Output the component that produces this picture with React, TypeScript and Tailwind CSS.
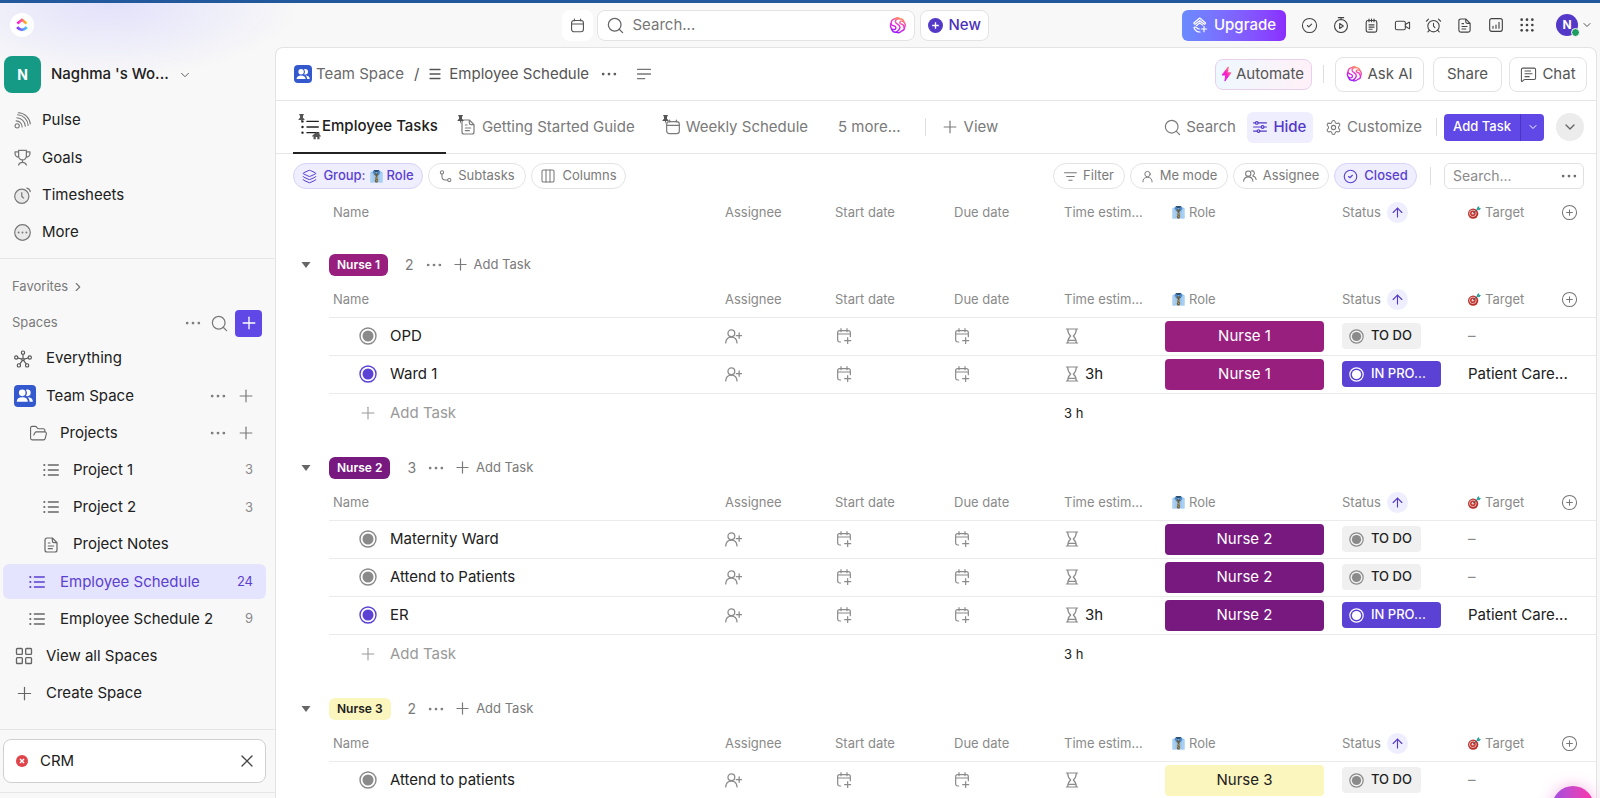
import React from "react";
import {
  AlarmClock, ArrowUp, ChevronDown, ChevronRight, CircleCheck, CirclePlus, Columns3, Ellipsis,
  FolderOpen, LayoutGrid, Layers, MessageSquareText, Plus, Search, Settings, Video, X,
} from "lucide-react";

type P = { className?: string };

const Svg = ({ className = "size-4", children, w = 1.5 }: P & { children: React.ReactNode; w?: number }) => (
  <svg viewBox="0 0 24 24" fill="none" stroke="currentColor" strokeWidth={w} strokeLinecap="round" strokeLinejoin="round" className={"shrink-0 " + className} aria-hidden="true">
    {children}
  </svg>
);

const Logo = () => (
  <svg viewBox="0 0 24 24" className="size-6 shrink-0" aria-hidden="true">
    <defs>
      <linearGradient id="lg-top" x1="0" x2="1"><stop stopColor="#ff02f0" /><stop offset="1" stopColor="#ffc800" /></linearGradient>
      <linearGradient id="lg-bot" x1="0" x2="1"><stop stopColor="#8930fd" /><stop offset="1" stopColor="#49ccf9" /></linearGradient>
    </defs>
    <circle cx="12" cy="12" r="12" fill="#fff" />
    <path d="M7.400 10.400 12 6.800l4.600 3.600" fill="none" stroke="url(#lg-top)" strokeWidth="2.600" />
    <path d="M7.200 14.200c2.800 3.600 6.800 3.600 9.600 0" fill="none" stroke="url(#lg-bot)" strokeWidth="2.800" />
  </svg>
);

const Calendar = ({ className }: P) => (
  <Svg className={className} w={1.8}><rect x="2.500" y="4" width="19" height="18" rx="4" /><path d="M2.500 9.500h19M7 1.500v3M17 1.500v3" /></Svg>
);
const CalendarAdd = ({ className }: P) => (
  <Svg className={className} w={1.8}><path d="M7 21H5.500A3 3 0 0 1 2.500 18V7A3 3 0 0 1 5.500 4h13a3 3 0 0 1 3 3v6M2.500 9h19M7.500 1v4.500M16.500 1v4.500M17.500 14.500v9M13 19h9" /></Svg>
);
const Pulse = ({ className }: P) => (
  <Svg className={className}><circle cx="4.500" cy="19.500" r="3" /><path d="M3 12.500a8.500 8.500 0 0 1 8.500 8.500M4 8a12.500 12.500 0 0 1 12 12M5 4a15.500 15.500 0 0 1 15 15M6 1A17.500 17.500 0 0 1 23 17" /></Svg>
);
const Trophy = ({ className }: P) => (
  <Svg className={className} w={1.8}><path d="M6.500 2h11v8a5.500 5.500 0 0 1-11 0zM6.500 4H1.500v2.500a5 5 0 0 0 5 5M17.500 4h5v2.500a5 5 0 0 1-5 5M12 15.500V19M6.500 22.500c1-2.300 2.500-3.500 5.500-3.500s4.500 1.200 5.500 3.500" /></Svg>
);
const Timesheet = ({ className }: P) => (
  <Svg className={className} w={1.7}><circle cx="11" cy="13" r="10" fill="#e9e9e9" /><path d="M11 8v5.500l2.500 2M18 1.500c2.500.4 4.500 2.500 5 5" /></Svg>
);
const More = ({ className }: P) => (
  <Svg className={className} w={1.7}><circle cx="12" cy="12" r="11" fill="#e9e9e9" /><path d="M6.500 12h.01M12 12h.01M17.500 12h.01" strokeWidth="2.600" /></Svg>
);
const Network = ({ className }: P) => (
  <Svg className={className}>
    <circle cx="12" cy="3.500" r="2.200" /><circle cx="3" cy="10" r="2.200" /><circle cx="21" cy="10" r="2.200" /><circle cx="6.500" cy="20.500" r="2.200" /><circle cx="17.500" cy="20.500" r="2.200" /><circle cx="12" cy="12.800" r="1.500" />
    <path d="M12 5.700V11M5.200 10.600l5.300 1.600M18.800 10.600l-5.300 1.600M7.800 18.600l3.200-4.500M16.200 18.600 13 14.100" />
  </Svg>
);
const Hamburger = ({ className }: P) => <Svg className={className} w={2.6}><path d="M2 3h20M2 12h20M2 21h20" /></Svg>;
const Lines = ({ className }: P) => <Svg className={className} w={2.4}><path d="M1 4h22M1 12h22M1 20h12" /></Svg>;
const FilterIcon = ({ className }: P) => <Svg className={className} w={2}><path d="M1 5h22M5 12h14M9 19h6" /></Svg>;
const Sliders = ({ className }: P) => (
  <Svg className={className} w={2}><path d="M1 5h3M9 5h14M1 12h13M19 12h4M1 19h6M12 19h11" /><circle cx="6.500" cy="5" r="2.300" /><circle cx="16.500" cy="12" r="2.300" /><circle cx="9.500" cy="19" r="2.300" /></Svg>
);
const Subtask = ({ className }: P) => (
  <Svg className={className} w={1.9}><circle cx="5.500" cy="4.500" r="3" /><circle cx="19" cy="18.500" r="3" /><path d="M5.500 7.500V12c0 4 2 6.500 6 6.500h4.500" /></Svg>
);
const Stopwatch = ({ className }: P) => (
  <Svg className={className} w={1.7}><circle cx="12" cy="13.500" r="9.700" /><path d="M8 1h8M12 1v3M10 9.800v7.400l5.500-3.700z" /></Svg>
);
const Notepad = ({ className }: P) => (
  <Svg className={className} w={1.8}><rect x="3.500" y="4" width="17" height="18.500" rx="3" /><path d="M8 1.500V6M12 1.500V6M16 1.500V6M8 11h8M8 14.500h8M8 18h5" /></Svg>
);
const Apps = ({ className }: P) => (
  <svg viewBox="0 0 24 24" className={className} fill="currentColor" aria-hidden="true">
    {[4, 12, 20].map((y) => [4, 12, 20].map((x) => <circle key={x + "-" + y} cx={x} cy={y} r="2" />))}
  </svg>
);
const Chart = ({ className }: P) => (
  <Svg className={className} w={1.7}><rect x="2.500" y="2.500" width="19" height="19" rx="3" /><path d="M7.500 17v-3M12 17v-5M16.500 17V8" /></Svg>
);
const Ai = ({ className }: P) => (
  <svg viewBox="0 0 24 24" className={"shrink-0 " + className} fill="none" stroke="url(#ai-g)" strokeWidth="2" strokeLinecap="round" aria-hidden="true">
    <defs><linearGradient id="ai-g" x1="0.300" y1="1" x2="0.700" y2="0"><stop stopColor="#9a1cff" /><stop offset=".55" stopColor="#f02bd4" /><stop offset="1" stopColor="#ff8a5c" /></linearGradient></defs>
    <path d="M8.500 2.500c2-1.500 5-1.500 7 0 3 0 5 2 5.500 4.500 2 2 2.400 5 1 7.500 0 3-2 5-4.500 5.500-2 2.400-5 2.800-7.500 1.500-3 .3-5.500-1.500-6-4.500-2-2-2.300-5-1-7.500 0-3.500 2.500-6.500 5.500-7z" />
    <path d="M15 2.500c-3.500 0-6 1.500-6 4 0 4 6.500 3 6.500 8 0 3-2.500 5-5.500 7M2.500 9.500c1.500 3 5 2.500 6.500 4s.5 4-1.500 4.200c-1.500.2-3-.2-4-.7M21.500 15c-.5-3.500-2-5-4-5.200-2-.3-3-2.300-1.500-3.500 1.500-1 3.500-.3 5 .700" />
  </svg>
);
const Bolt = ({ className }: P) => (
  <svg viewBox="0 0 12 18" className={className} aria-hidden="true">
    <defs><linearGradient id="bolt-g" x1="0" y1="1" x2="1" y2="0"><stop stopColor="#b020ff" /><stop offset=".5" stopColor="#ff1fc8" /><stop offset="1" stopColor="#ff9a4c" /></linearGradient></defs>
    <path d="M8 1 1 10.200h4L4.200 17 11 7.600H7.200z" fill="url(#bolt-g)" stroke="url(#bolt-g)" strokeLinejoin="round" />
  </svg>
);
const UpgradeIcon = ({ className }: P) => (
  <Svg className={className} w={1.8}><path d="M3 8.500 11.500 1.500 20 8.500c.8 1-.8 2.800-2 2L11.500 5.500 5 10.500c-1.200.8-2.800-1-2-2zM6.500 13l5-4 4.500 3.200M3.200 15.500c1.500-1 2.500-.5 3.500.5 1.500 1.500 3 2 4.300 2M3 16c1.500 4 5 6.500 9 6.500M18 14v8M14 18h8" /></Svg>
);
const People = ({ className }: P) => (
  <span className={"flex shrink-0 items-center justify-center bg-[#3459cf] " + className}>
    <svg viewBox="0 0 24 24" className="size-4/5" fill="#fff" aria-hidden="true">
      <path d="M15.500 3.500a4.500 4.500 0 0 1 0 9c-.8 0-1.500-.2-2-.5 2-2.500 2-5.500 0-8 .5-.3 1.200-.5 2-.5zM17 14c3.500.5 6 2.500 6 6h-4.500c0-2.500-.8-4.500-2.500-6z" />
      <circle cx="8.500" cy="8" r="4.500" /><path d="M1 20c0-4 3-6 7.500-6s7.500 2 7.500 6z" />
    </svg>
  </span>
);
const Assignees = ({ className }: P) => (
  <Svg className={className} w={1.800}><circle cx="9" cy="8" r="4.500" /><path d="M1 21c.5-5 3-7.500 8-7.500s7.500 2.500 8 7.500M14 3.500c4.500-1.500 7.500 3.500 4 7l-1.500 1.500c3.500.5 5.500 2.500 6 6" /></Svg>
);
const Person = ({ className }: P) => (
  <Svg className={className} w={1.800}><circle cx="12" cy="7.500" r="5" /><path d="M3.500 22c0-5.500 3-8.500 8.500-8.500s8.500 3 8.500 8.500" /></Svg>
);
const PersonAdd = ({ className }: P) => (
  <Svg className={className} w={1.800}><circle cx="9" cy="7.500" r="4.800" /><path d="M1 21c.5-5 3-8 8-8s7.500 3 8 8M20 7v7.500M16 10.800h7.500" /></Svg>
);
const HourglassIcon = ({ className }: P) => (
  <Svg className={className} w={1.800}><path d="M3.500 1.500h17M3.500 22.500h17M5.500 1.500c0 6 1 7.500 4.500 10.500-3.500 3-4.500 4.500-4.500 10.500M18.500 1.500c0 6-1 7.500-4.500 10.500 3.500 3 4.500 4.500 4.500 10.500M8 18.500h8" /></Svg>
);
const Doc = ({ className }: P) => (
  <Svg className={className} w={1.800}><path d="M14 1.500H6A3 3 0 0 0 3 4.500v15a3 3 0 0 0 3 3h12a3 3 0 0 0 3-3V8.500zM14 1.500V6a2.500 2.500 0 0 0 2.500 2.500H21M8 9h2.500M8 13.500h8M8 17.500h6" /></Svg>
);
const Dotlist = ({ className }: P) => (
  <Svg className={className} w={1.900}><path d="M8 4.500h15M8 12h15M8 19.500h15" /><path d="M2 4.500h.01M2 12h.01M2 19.500h.01" strokeWidth="3.200" /></Svg>
);
const Shirt = ({ className }: P) => (
  <svg viewBox="1 0 22 24" className={"shrink-0 " + className} aria-hidden="true">
    <path d="M1 4 7 1h10l6 3v19H1z" fill="#9cc6ee" /><path d="M1 4v19h5V8zM23 4v19h-5V8z" fill="#a9d0f3" />
    <path d="M7 0h10l-1 4H8z" fill="#2c4f74" /><path d="m7 1 5 5-4 4-3-6zM17 1l-5 5 4 4 3-6z" fill="#4a86c4" />
    <path d="m10 5 2 2 2-2 1 4-1.500 2L15 20l-1 3h-4l-1-3 1.500-9L9 9z" fill="#6b5d3a" /><path d="m10 13 4 3M10 17.500l4 3" stroke="#d7bd7a" strokeWidth="1.500" />
  </svg>
);
const TargetIcon = ({ className }: P) => (
  <svg viewBox="0 0 24 24" className={"shrink-0 " + className} aria-hidden="true">
    <ellipse cx="9.500" cy="14" rx="9.500" ry="9.500" fill="#b9302b" /><circle cx="9" cy="13.500" r="6.600" fill="#eccfce" /><circle cx="9" cy="13.500" r="5.200" fill="#c9362f" /><circle cx="9" cy="13.500" r="2.200" fill="#f3dedd" />
    <path d="m9 13.500 9-7.500" stroke="#465560" strokeWidth="1.800" /><path d="m16 7.500.5-4.500 3.500-3 .8 3.200 3.200.8-3 4z" fill="#2fa39b" />
  </svg>
);
const Pin = ({ className }: P) => (
  <svg viewBox="0 0 12 12" className={className} fill="#555" aria-hidden="true"><path d="M3 0h6v1.500L8 2v3l2 2v1H6.700L6 12l-.7-4H2V7l2-2V2L3 1.500z" /></svg>
);
const HomeMini = ({ className }: P) => (
  <svg viewBox="0 0 12 12" className={className} fill="#555" aria-hidden="true"><path d="M6 1 0 6.500l1 1L2 7v4h3V8h2v3h3V7l1 .5 1-1L10 4.500V2H8.500v1.200z" /></svg>
);
const StatusDot = ({ className }: P) => (
  <svg viewBox="0 0 18 18" className={"shrink-0 " + className} aria-hidden="true"><circle cx="9" cy="9" r="8" fill="none" stroke="currentColor" strokeWidth="1.400" /><circle cx="9" cy="9" r="5.500" fill="currentColor" /></svg>
);
const Dots = () => <Ellipsis className="size-5" strokeWidth={1.3} />;

const quick = [
  { label: "Pulse", Icon: Pulse }, { label: "Goals", Icon: Trophy }, { label: "Timesheets", Icon: Timesheet }, { label: "More", Icon: More },
];

const Row = ({ icon, label, pad, right, active }: { icon: React.ReactNode; label: string; pad: string; right?: React.ReactNode; active?: boolean }) => (
  <li className="flex min-h-8 flex-1 items-center pr-[9px] pl-[3px]">
    <div className={"flex h-[35px] w-full items-center rounded-md pr-[13px] " + pad + (active ? " bg-[#e5e4ff] text-[#5b3fd0]" : "")}>
      <a href="#" className="flex min-w-0 flex-1 items-center">{icon}<span className="truncate">{label}</span></a>
      {right}
    </div>
  </li>
);

const RowActions = ({ name }: { name: string }) => (
  <span className="-mr-[3px] flex items-center gap-2 text-[#777]">
    <button aria-label={name + " options"}><Dots /></button>
    <button aria-label={"Add to " + name}><Plus className="size-5" strokeWidth={1.4} /></button>
  </span>
);
const Count = ({ n, on }: { n: number; on?: boolean }) => <span className={"text-[13px] " + (on ? "" : "text-[#8a8a8a]")}>{n}</span>;

function Sidebar() {
  return (
    <aside className="flex w-[275px] shrink-0 flex-col text-[15px] text-[#202020]">
      <div className="flex h-[55px] shrink-0 items-center pl-1">
        <span className="flex size-[37px] items-center justify-center rounded-lg bg-[#159a86] text-sm font-bold text-white">N</span>
        <button className="ml-[10px] flex items-center gap-[9px] font-medium">Naghma 's Wo...<ChevronDown className="size-[14px] text-[#555]" strokeWidth={1.6} /></button>
      </div>
      <ul className="flex h-[157px] shrink-0 flex-col border-b border-[#e6e6e6] pb-[7px]">
        {quick.map(({ label, Icon }) => (
          <li key={label} className="flex flex-1 items-center">
            <a href="#" className="flex items-center gap-[11px] pl-[14px]"><Icon className="size-[17px] text-[#777]" />{label}</a>
          </li>
        ))}
      </ul>
      <div className="flex h-[51px] shrink-0 items-center pt-1 pl-3 text-[13px] text-[#7a7a7a]"><button className="flex items-center gap-[3px]">Favorites<ChevronRight className="size-[14px]" /></button></div>
      <div className="flex h-[26px] shrink-0 items-center pr-[13px] pl-3 text-[13px] text-[#7a7a7a]">
        <span className="flex-1">Spaces</span>
        <button aria-label="Space options"><Dots /></button>
        <button aria-label="Search spaces" className="mr-1.5 ml-[7px]"><Search className="size-[19px]" strokeWidth={1.6} /></button>
        <button aria-label="New space" className="flex size-[27px] items-center justify-center rounded bg-[#5f48e5] text-white"><Plus className="size-5" strokeWidth={1.6} /></button>
      </div>
      <ul className="flex min-h-0 flex-1 flex-col pt-1 pb-[17px]">
        <Row pad="pl-[11px]" icon={<Network className="mr-[14px] size-[18px] text-[#555]" />} label="Everything" />
        <Row pad="pl-[11px]" icon={<People className="mr-[10px] size-[22px] rounded" />} label="Team Space" right={<RowActions name="Team Space" />} />
        <Row pad="pl-[26px]" icon={<FolderOpen className="mr-3 size-[19px] text-[#666]" strokeWidth={1.4} />} label="Projects" right={<RowActions name="Projects" />} />
        <Row pad="pl-10" icon={<Dotlist className="mr-[14px] size-4 text-[#666]" />} label="Project 1" right={<Count n={3} />} />
        <Row pad="pl-10" icon={<Dotlist className="mr-[14px] size-4 text-[#666]" />} label="Project 2" right={<Count n={3} />} />
        <Row pad="pl-10" icon={<Doc className="mr-[14px] size-4 text-[#666]" />} label="Project Notes" />
        <Row pad="pl-[26px]" icon={<Dotlist className="mr-[15px] size-4" />} label="Employee Schedule" right={<Count n={24} on />} active />
        <Row pad="pl-[26px]" icon={<Dotlist className="mr-[15px] size-4 text-[#666]" />} label="Employee Schedule 2" right={<Count n={9} />} />
        <Row pad="pl-[11px]" icon={<LayoutGrid className="mr-3 size-5 text-[#666]" strokeWidth={1.6} />} label="View all Spaces" />
        <Row pad="pl-[11px]" icon={<Plus className="mr-[11px] size-[21px] text-[#666]" strokeWidth={1.4} />} label="Create Space" />
      </ul>
      <div className="shrink-0 border-y border-[#e6e6e6] py-[9px] pr-[9px] pl-[3px]">
        <div className="flex h-[44px] items-center rounded-lg border border-[#d0d0d0] bg-white pr-2 pl-3">
          <svg viewBox="0 0 12 12" className="mr-3 size-3" aria-hidden="true"><circle cx="6" cy="6" r="6" fill="#e04349" /><path d="m4 4 4 4M8 4 4 8" stroke="#fff" strokeWidth="1.500" /></svg>
          <span className="flex-1">CRM</span>
          <button aria-label="Close CRM"><X className="size-5 text-[#444]" strokeWidth={1.6} /></button>
        </div>
      </div>
      <div className="h-[5px] shrink-0" />
    </aside>
  );
}

const tools = [
  { label: "Tasks", Icon: CircleCheck, size: "size-[17px]" }, { label: "Timer", Icon: Stopwatch, size: "size-4" }, { label: "Notepad", Icon: Notepad, size: "size-[15px]" },
  { label: "Record clip", Icon: Video, size: "size-[17px]" }, { label: "Reminders", Icon: AlarmClock, size: "size-[17px]" }, { label: "Docs", Icon: Doc, size: "size-[15px]" },
  { label: "Dashboards", Icon: Chart, size: "size-4" }, { label: "Apps", Icon: Apps, size: "size-4" },
];

function TopBar() {
  return (
    <header className="grid h-11 shrink-0 grid-cols-[1fr_auto_1fr] items-center">
      <div className="pl-[10px]"><Logo /></div>
      <div className="mr-[50px] flex h-[31px] items-stretch">
        <button aria-label="Calendar" className="mr-1 flex w-[31px] items-center justify-center rounded-lg bg-white text-[#555]"><Calendar className="size-[15px]" /></button>
        <label className="mr-[5px] flex w-[318px] items-center rounded-lg border border-[#e3e3e3] bg-white px-[8px]">
          <Search className="mr-2 size-[19px] text-[#666]" strokeWidth={1.6} />
          <input aria-label="Search" placeholder="Search..." className="min-w-0 flex-1 text-[15px] text-[#444] outline-none placeholder:text-[#777]" />
          <Ai className="size-[17px]" />
        </label>
        <button className="flex w-[69px] items-center gap-[6px] rounded-lg border border-[#e3e3e3] bg-white pl-[7px] text-[15px] font-medium text-[#4a32b8]">
          <svg viewBox="0 0 16 16" className="size-[15px] shrink-0" aria-hidden="true"><circle cx="8" cy="8" r="8" fill="#5438c8" /><path d="M8 4.500v7M4.500 8h7" stroke="#fff" strokeWidth="1.400" /></svg>New
        </button>
      </div>
      <div className="flex items-center justify-end pr-[7px]">
        <button className="mr-2 flex h-[31px] w-[104px] items-center justify-center gap-[6px] rounded-md bg-linear-to-r from-[#6a8bff] to-[#8a2cff] text-[15px] font-medium text-white"><UpgradeIcon className="size-4" />Upgrade</button>
        {tools.map(({ label, Icon, size }) => (
          <button key={label} aria-label={label} className="flex w-[31px] items-center justify-center text-[#444]"><Icon className={size} strokeWidth={1.5} /></button>
        ))}
        <button aria-label="Account" className="ml-[14px] flex items-center gap-[3px]">
          <span className="relative flex size-[22px] items-center justify-center rounded-full bg-[#5438c8] text-xs font-bold text-white">N
            <span className="absolute -right-[2px] -bottom-[1px] size-[9px] rounded-full border border-white bg-[#1f9d61]" />
          </span>
          <ChevronDown className="size-3 text-[#555]" />
        </button>
      </div>
    </header>
  );
}

const Sep = ({ className = "" }: P) => <span className={"h-[18px] w-px bg-[#dedede] " + className} />;

function Breadcrumbs() {
  const btn = "flex h-[35px] items-center justify-center gap-[5px] rounded-lg border border-[#e3e3e3] bg-white";
  return (
    <div className="flex h-[53px] shrink-0 items-center border-b border-[#e6e6e6] pr-[9px] pl-[18px] text-[15px] text-[#555]">
      <People className="mr-1 size-[18px] rounded" /><a href="#" className="text-[#6a6a6a]">Team Space</a>
      <span className="mx-[10px]">/</span><Hamburger className="mr-2 size-3" /><a href="#">Employee Schedule</a>
      <button aria-label="List options" className="ml-[10px]"><Dots /></button>
      <button aria-label="Description" className="ml-[18px] text-[#777]"><Lines className="size-[14px]" /></button>
      <div className="ml-auto flex items-center">
        <button className="flex h-[31px] w-[97px] items-center gap-1 rounded-lg border border-[#e9cfee] bg-linear-to-r from-[#eef8ff] to-[#fff1f7] pl-[5px]"><Bolt className="h-4 w-[11px]" />Automate</button>
        <Sep className="mx-[11px]" />
        <button className={btn + " mr-[9px] w-[89px]"}><Ai className="size-4" />Ask AI</button>
        <button className={btn + " mr-[7px] w-[69px]"}>Share</button>
        <button className={btn + " w-[78px]"}><MessageSquareText className="size-[17px]" strokeWidth={1.5} />Chat</button>
      </div>
    </div>
  );
}

function Tabs() {
  return (
    <div className="flex h-[53px] shrink-0 items-stretch border-b border-[#e6e6e6] pr-3 pl-[17px] text-[15px] text-[#7a7a7a]">
      <button className="relative -mb-px flex items-center gap-[3px] border-b-2 border-[#222] px-2 font-medium text-[#202020]">
        <span className="relative"><Dotlist className="size-[18px]" /><Pin className="absolute -top-1 -left-1 size-[9px]" /><HomeMini className="absolute -right-0.5 -bottom-1 size-[9px]" /></span>Employee Tasks
      </button>
      <button className="ml-[14px] flex items-center gap-[6px]"><span className="relative"><Doc className="size-4" /><Pin className="absolute -top-1 -left-1 size-[9px]" /></span>Getting Started Guide</button>
      <button className="ml-[30px] flex items-center gap-[5px]"><span className="relative"><Calendar className="size-4" /><Pin className="absolute -top-1 -left-1 size-[9px]" /></span>Weekly Schedule</button>
      <button className="ml-[30px]">5 more...</button>
      <Sep className="mr-[14px] ml-6 self-center" />
      <button className="flex items-center gap-1"><Plus className="size-5" strokeWidth={1.4} />View</button>
      <div className="ml-auto flex items-center">
        <button className="flex items-center gap-1"><Search className="size-[19px]" strokeWidth={1.5} />Search</button>
        <button className="mr-3 ml-[11px] flex h-[31px] w-[66px] items-center justify-center gap-[6px] rounded-md bg-[#eeeeff] font-medium text-[#5438c8]"><Sliders className="size-[14px]" />Hide</button>
        <button className="flex items-center gap-[5px]"><Settings className="size-[17px]" strokeWidth={1.5} />Customize</button>
        <Sep className="mr-[7px] ml-[14px]" />
        <div className="mr-3 flex h-[27px] w-[100px] overflow-hidden rounded bg-[#5f48e5] text-[13px] font-medium text-white">
          <button className="flex-1">Add Task</button>
          <button aria-label="More task types" className="flex w-6 items-center justify-center border-l border-[#4b34c4]"><ChevronDown className="size-3" /></button>
        </div>
        <button aria-label="Collapse" className="flex size-7 items-center justify-center rounded-full bg-[#ececec] text-[#666]"><ChevronDown className="size-4" /></button>
      </div>
    </div>
  );
}

function Chip({ children, w, on }: { children: React.ReactNode; w: string; on?: boolean }) {
  return <button className={"flex h-[26px] items-center justify-center gap-[6px] rounded-full border " + w + (on ? " border-[#d6d3f7] bg-[#eeeeff] font-medium text-[#5b3fd0]" : " border-[#e3e3e3] text-[#7a7a7a]")}>{children}</button>;
}

function Filters() {
  return (
    <div className="flex shrink-0 items-center pt-[9px] pr-3 pl-[17px] text-[13px]">
      <div className="flex gap-[5px]">
        <Chip w="w-[130px]" on><Layers className="size-[15px]" strokeWidth={1.6} /><span className="flex items-center gap-1">Group:<Shirt className="size-[13px]" />Role</span></Chip>
        <Chip w="w-[98px]"><Subtask className="size-[13px]" />Subtasks</Chip>
        <Chip w="w-[95px]"><Columns3 className="size-4" strokeWidth={1.6} />Columns</Chip>
      </div>
      <div className="ml-auto flex items-center gap-[5px]">
        <Chip w="w-[72px]"><FilterIcon className="size-[13px]" />Filter</Chip>
        <Chip w="w-[98px]"><Person className="size-[13px]" />Me mode</Chip>
        <Chip w="w-[96px]"><Assignees className="size-[14px]" />Assignee</Chip>
        <Chip w="w-[83px]" on><CircleCheck className="size-[15px]" strokeWidth={1.8} />Closed</Chip>
        <Sep className="mx-2" />
        <label className="flex h-[26px] w-[140px] items-center rounded-md border border-[#e0e0e0] pr-1 pl-2">
          <input aria-label="Search tasks" placeholder="Search..." className="min-w-0 flex-1 text-sm outline-none placeholder:text-[#8a8a8a]" /><span className="text-[#666]"><Dots /></span>
        </label>
      </div>
    </div>
  );
}

const Cols = () => (
  <colgroup><col /><col className="w-[110px]" /><col className="w-[119px]" /><col className="w-[110px]" /><col className="w-[101px]" /><col className="w-[177px]" /><col className="w-[126px]" /><col className="w-[128px]" /></colgroup>
);

function HeadRow({ line }: { line?: boolean }) {
  return (
    <tr className={"h-[35px] text-[13px] text-[#8a8a8a] *:p-0 *:text-left *:font-normal " + (line ? "border-b border-[#ebebeb]" : "")}>
      <th scope="col"><span className="pl-1">Name</span></th><th scope="col">Assignee</th><th scope="col">Start date</th><th scope="col">Due date</th><th scope="col">Time estim...</th>
      <th scope="col"><span className="flex items-center gap-1 pl-[7px]"><Shirt className="size-[13px]" />Role</span></th>
      <th scope="col"><span className="flex items-center gap-[6px]">Status<span className="flex size-[21px] items-center justify-center rounded-full bg-[#eeeeff] text-[#5438c8]"><ArrowUp className="size-[15px]" strokeWidth={1.8} /></span></span></th>
      <th scope="col"><span className="flex items-center gap-1"><TargetIcon className="size-[13px]" />Target<button aria-label="Add column" className="mr-[18px] ml-auto"><CirclePlus className="size-[17px] text-[#777]" strokeWidth={1.5} /></button></span></th>
    </tr>
  );
}

type Task = { name: string; busy?: boolean };
const groups: { name: string; color: string; count: number; tasks: Task[]; total?: string }[] = [
  { name: "Nurse 1", color: "bg-[#991f7e] text-white", count: 2, tasks: [{ name: "OPD" }, { name: "Ward 1", busy: true }], total: "3 h" },
  { name: "Nurse 2", color: "bg-[#77197f] text-white", count: 3, tasks: [{ name: "Maternity Ward" }, { name: "Attend to Patients" }, { name: "ER", busy: true }], total: "3 h" },
  { name: "Nurse 3", color: "bg-[#fbf5be] text-[#202020]", count: 2, tasks: [{ name: "Attend to patients" }] },
];

function Group({ name, color, count, tasks, total }: (typeof groups)[number]) {
  return (
    <section>
      <div className="flex h-[35px] items-center pl-[25px] text-[13px] text-[#7a7a7a]">
        <button aria-label={"Collapse " + name} className="mr-[18px]"><svg viewBox="0 0 10 6" className="h-[6px] w-[10px]" fill="#666" aria-hidden="true"><path d="M.5 0h9L5 6z" /></svg></button>
        <span className={"rounded-md px-2 text-xs leading-[22px] font-semibold " + color}>{name}</span>
        <span className="ml-[17px] text-sm">{count}</span>
        <button aria-label={name + " options"} className="ml-[10px]"><Dots /></button>
        <button className="ml-[7px] flex items-center gap-1"><Plus className="size-[19px]" strokeWidth={1.5} />Add Task</button>
      </div>
      <div className="pl-[53px]">
        <table className="w-full table-fixed border-collapse text-[15px] text-[#202020]">
          <Cols />
          <thead><HeadRow line /></thead>
          <tbody>
            {tasks.map((t) => (
              <tr key={t.name} className="h-[38px] border-b border-[#ebebeb] text-[#8a8a8a] *:p-0">
                <td><span className="flex items-center gap-[13px] pl-[30px]"><StatusDot className={"size-[18px] " + (t.busy ? "text-[#5b41d4]" : "text-[#8a8a8a]")} /><a href="#" className="text-[#202020]">{t.name}</a></span></td>
                <td><PersonAdd className="size-[17px]" /></td>
                <td><CalendarAdd className="ml-px size-4" /></td>
                <td><CalendarAdd className="size-4" /></td>
                <td><span className="flex items-center gap-[5px] text-[#202020]"><HourglassIcon className="size-4 text-[#8a8a8a]" />{t.busy ? "3h" : ""}</span></td>
                <td><span className={"flex h-[31px] w-[159px] items-center justify-center rounded " + color}>{name}</span></td>
                <td>
                  <span className={"flex h-[26px] items-center gap-[7px] rounded px-[7px] text-[13px] font-medium " + (t.busy ? "w-[99px] bg-[#5b41d4] text-white" : "w-[79px] bg-[#f0f0f0] text-[#202020]")}>
                    <StatusDot className={"size-[15px] " + (t.busy ? "text-white" : "text-[#8a8a8a]")} />{t.busy ? "IN PRO..." : "TO DO"}
                  </span>
                </td>
                <td>{t.busy ? <span className="text-[#202020]">Patient Care...</span> : "–"}</td>
              </tr>
            ))}
          </tbody>
          {total && (
            <tfoot>
              <tr className="h-10 *:p-0">
                <td colSpan={4}><button className="flex items-center gap-3 pl-[29px] text-[#999]"><Plus className="size-5" strokeWidth={1.3} />Add Task</button></td>
                <td className="text-[13px]">{total}</td><td colSpan={3} />
              </tr>
            </tfoot>
          )}
        </table>
      </div>
    </section>
  );
}

export default function App() {
  return (
    <div className="relative flex h-screen flex-col overflow-hidden border-t-[3px] border-[#22599c] bg-[#f8f8f8] bg-[radial-gradient(ellipse_190px_75px_at_110px_0px,#e2e1fb,transparent)] font-['Inter',sans-serif]">
      <TopBar />
      <div className="flex min-h-0 flex-1">
        <Sidebar />
        <main className="mr-[3px] flex min-w-0 flex-1 flex-col overflow-hidden rounded-t-lg border border-b-0 border-[#e3e3e3] bg-white">
          <Breadcrumbs />
          <Tabs />
          <Filters />
          <div className="shrink-0 pt-[6px] pl-[53px]"><table className="w-full table-fixed border-collapse"><Cols /><thead><HeadRow /></thead></table></div>
          <div className="flex flex-col gap-[17px] pt-[17px]">{groups.map((g) => <Group key={g.name} {...g} />)}</div>
        </main>
      </div>
      <button aria-label="Quick actions" className="absolute right-[6px] -bottom-[30px] size-[42px] rounded-full bg-linear-to-r from-[#a04be0] to-[#ff2fa8] shadow-[0_0_16px_#f7b5e4]" />
    </div>
  );
}
